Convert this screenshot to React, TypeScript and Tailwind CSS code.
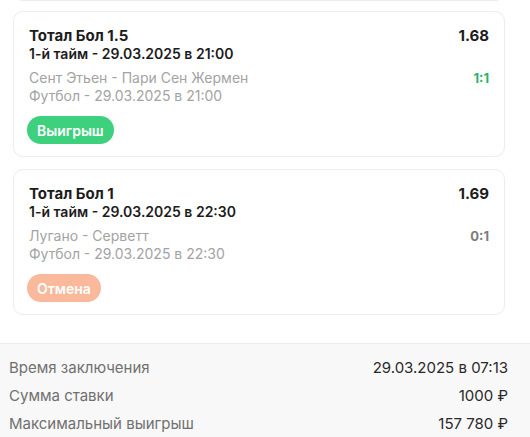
const bets = [
  {
    title: "Тотал Бол 1.5",
    period: "1-й тайм - 29.03.2025 в 21:00",
    match: "Сент Этьен - Пари Сен Жермен",
    sport: "Футбол - 29.03.2025 в 21:00",
    odds: "1.68",
    score: "1:1",
    won: true,
  },
  {
    title: "Тотал Бол 1",
    period: "1-й тайм - 29.03.2025 в 22:30",
    match: "Лугано - Серветт",
    sport: "Футбол - 29.03.2025 в 22:30",
    odds: "1.69",
    score: "0:1",
    won: false,
  },
];

const summary = [
  ["Время заключения", "29.03.2025 в 07:13"],
  ["Сумма ставки", "1000 ₽"],
  ["Максимальный выигрыш", "157 780 ₽"],
];

export default function App() {
  return (
    <div className="w-[530px] h-[437px] overflow-hidden bg-white font-['Inter',sans-serif]">
      <div className="pl-[13px] pr-[25px]">
        <div className="-mt-[9px] h-[10px] rounded-b-[10px] border border-[#ececec]" />
        <div className="mt-[10px] flex flex-col gap-[12px]">
          {bets.map((bet) => (
            <div
              key={bet.title}
              className="rounded-[10px] border border-[#ececec] px-[15px] pt-[15px] pb-[12px]"
            >
              <div className="flex justify-between">
                <div>
                  <div className="text-[15px] leading-[18px] font-bold text-[#1c1c1c]">
                    {bet.title}
                  </div>
                  <div className="text-[14px] leading-[18px] font-semibold text-[#1c1c1c]">
                    {bet.period}
                  </div>
                  <div className="mt-[6px] text-[14px] leading-[18px] text-[#a3a3a3]">
                    {bet.match}
                  </div>
                  <div className="text-[14px] leading-[18px] text-[#a3a3a3]">{bet.sport}</div>
                </div>
                <div className="flex flex-col items-end">
                  <div className="text-[15px] leading-[18px] font-bold text-[#1c1c1c]">
                    {bet.odds}
                  </div>
                  <div
                    className={
                      bet.won
                        ? "mt-[24px] text-[13px] leading-[18px] font-bold text-[#2bb36a]"
                        : "mt-[24px] text-[13px] leading-[18px] font-bold text-[#7c7c7c]"
                    }
                  >
                    {bet.score}
                  </div>
                </div>
              </div>
              <div
                className={
                  bet.won
                    ? "-ml-[2px] mt-[11px] inline-flex h-[28px] items-center rounded-full bg-[#3dd07d] px-[10px] text-[14px] font-semibold text-white"
                    : "-ml-[2px] mt-[11px] inline-flex h-[28px] items-center rounded-full bg-[#f9b99a] px-[10px] text-[14px] font-semibold text-white"
                }
              >
                {bet.won ? "Выигрыш" : "Отмена"}
              </div>
            </div>
          ))}
        </div>
      </div>
      <div className="mt-[28px] border-t border-[#ececec] bg-[#f8f8f8] pl-[9px] pr-[22px] pt-[10px] pb-[20px]">
        {summary.map(([label, value]) => (
          <div key={label} className="flex h-[28px] items-center justify-between text-[15px]">
            <span className="text-[#707070]">{label}</span>
            <span className="text-[#2a2a2a]">{value}</span>
          </div>
        ))}
      </div>
    </div>
  );
}
